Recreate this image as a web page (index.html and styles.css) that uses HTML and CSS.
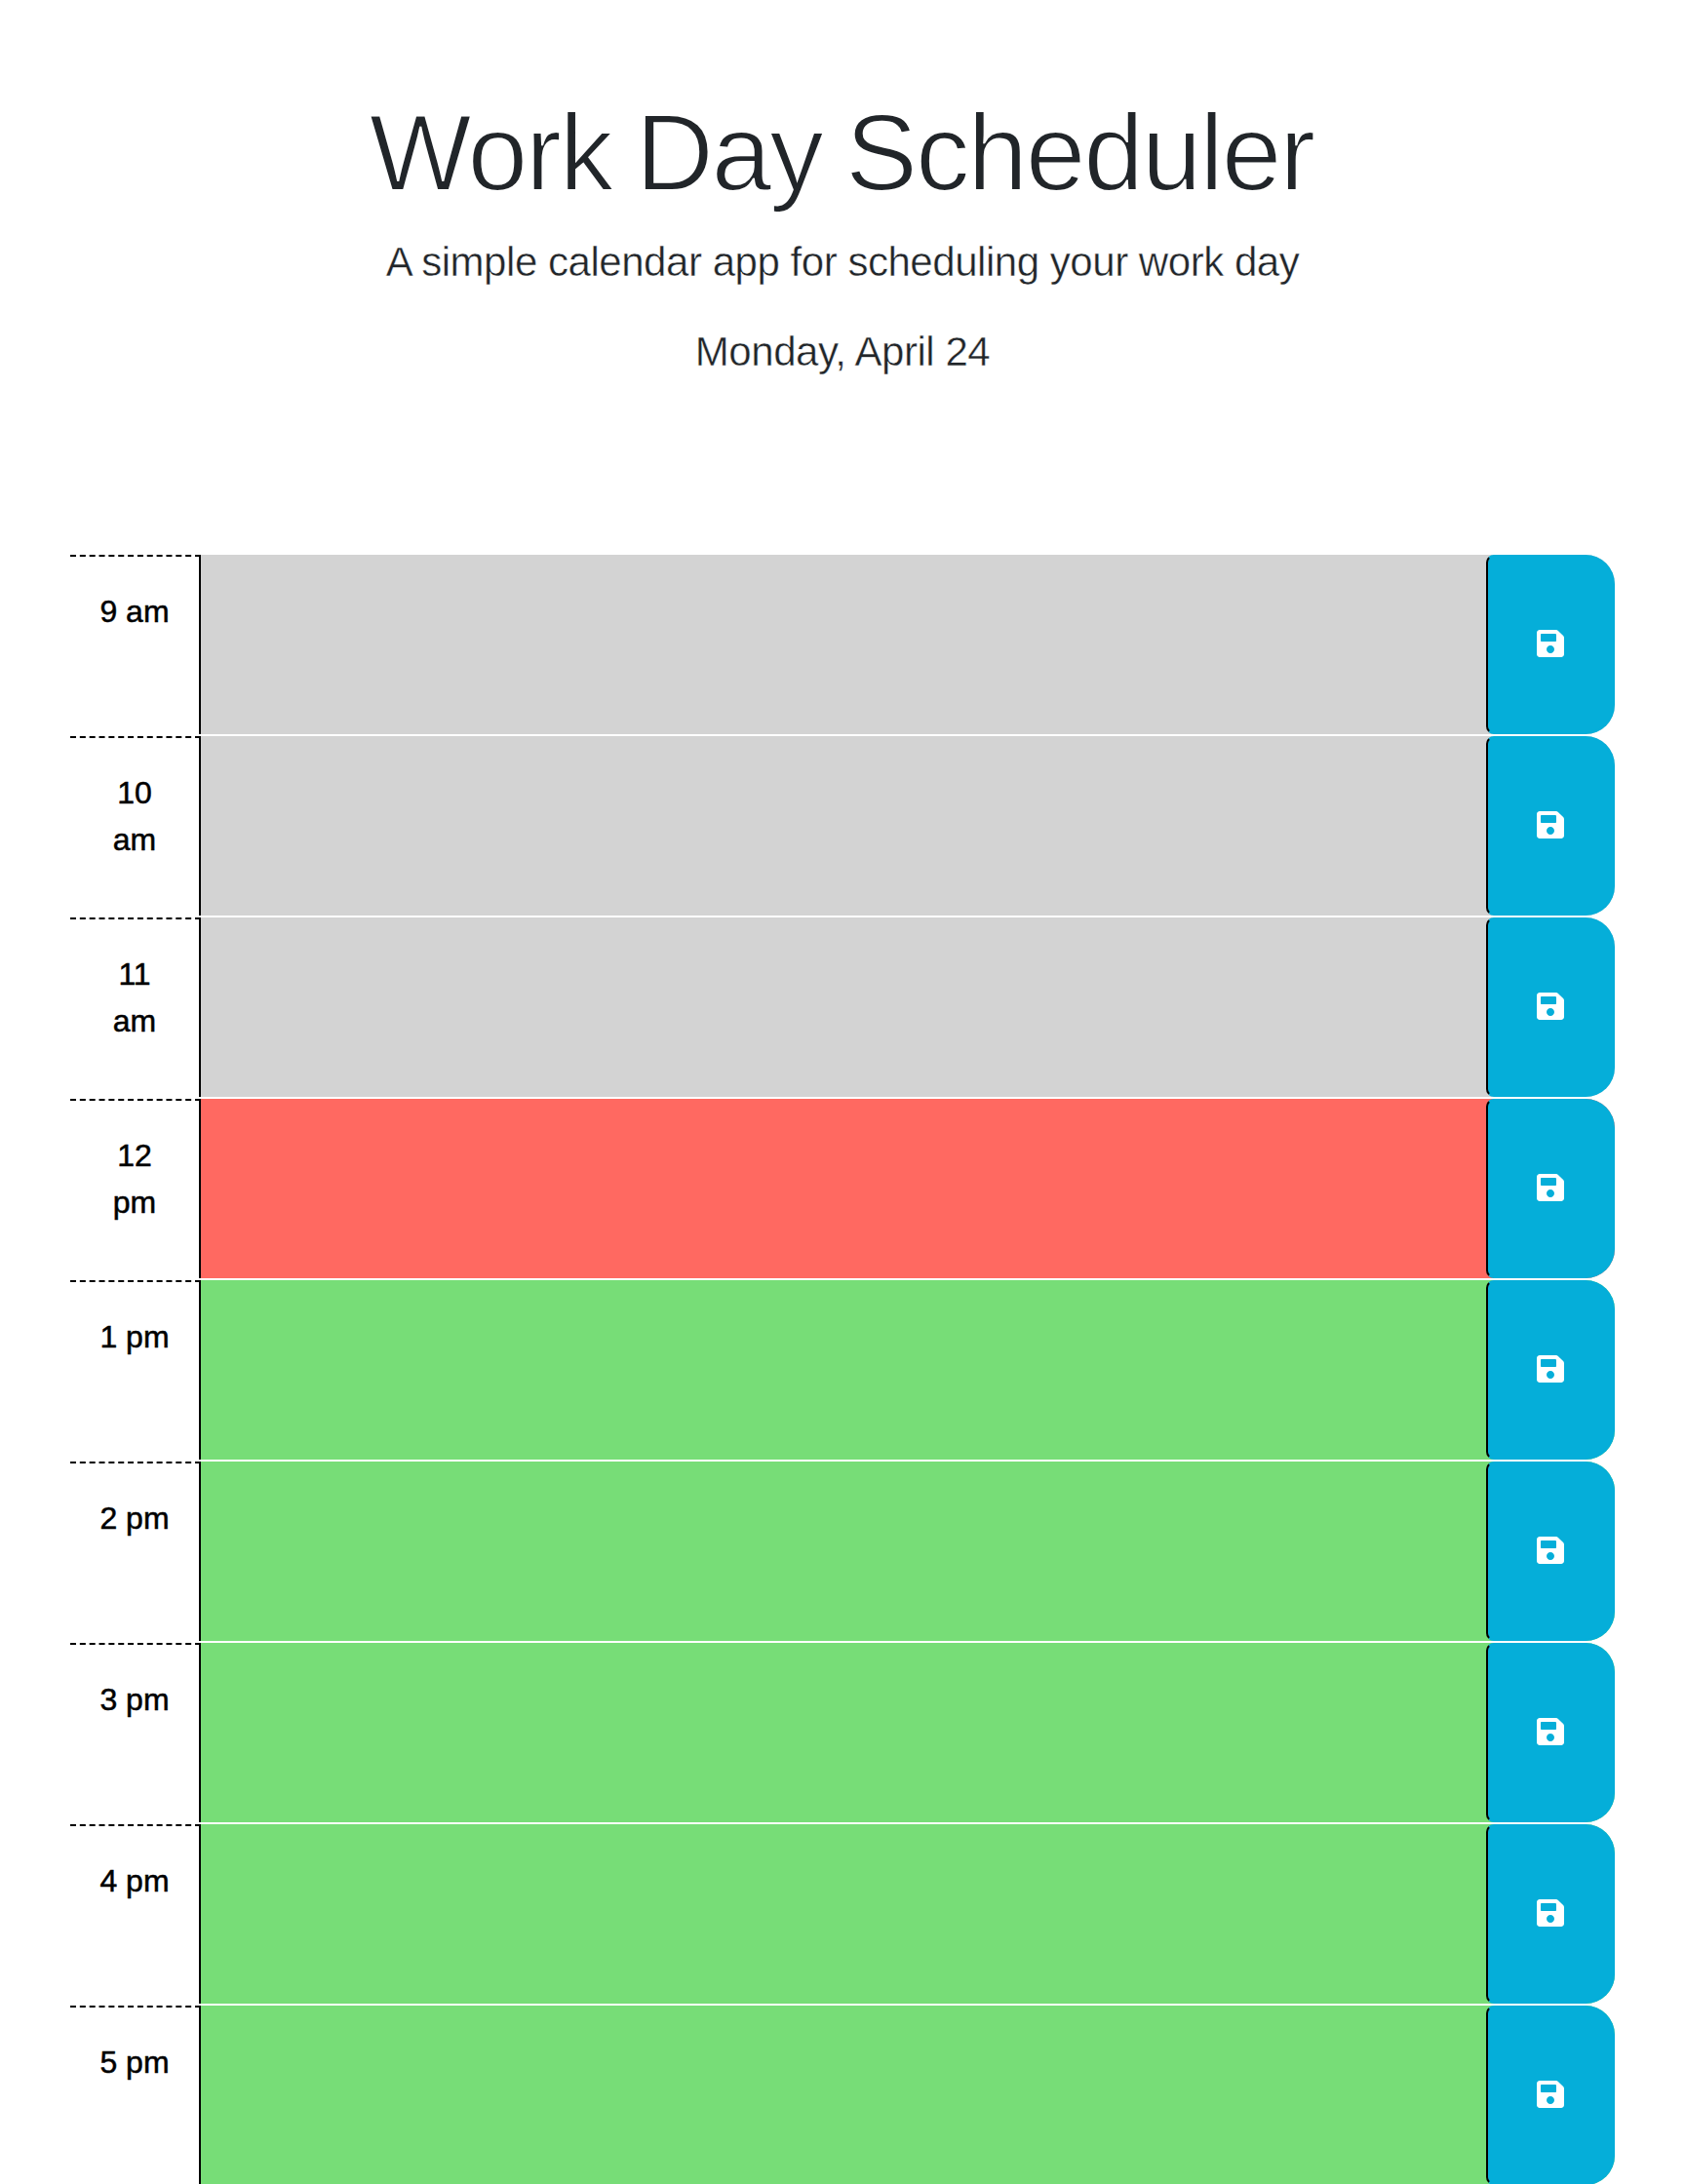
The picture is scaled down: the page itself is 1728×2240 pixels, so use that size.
FILE: index.html
```html
<!DOCTYPE html>
<html lang="en">
<head>
<meta charset="utf-8">
<title>Work Day Scheduler</title>
<link rel="stylesheet" href="styles.css">
</head>
<body>
<svg width="0" height="0" class="sprite" aria-hidden="true">
  <symbol id="save" viewBox="0 0 448 512"><path d="M433.941 129.941l-83.882-83.882A48 48 0 0 0 316.118 32H48C21.49 32 0 53.49 0 80v352c0 26.51 21.49 48 48 48h352c26.51 0 48-21.49 48-48V163.882a48 48 0 0 0-14.059-33.941zM224 416c-35.346 0-64-28.654-64-64 0-35.346 28.654-64 64-64s64 28.654 64 64c0 35.346-28.654 64-64 64zm96-304.52V212c0 6.627-5.373 12-12 12H76c-6.627 0-12-5.373-12-12V108c0-6.627 5.373-12 12-12h228.52c3.183 0 6.235 1.264 8.485 3.515l3.48 3.48A11.996 11.996 0 0 1 320 111.48z"/></symbol>
</svg>
<header class="header">
  <h1 class="title">Work Day Scheduler</h1>
  <p class="lead">A simple calendar app for scheduling your work day</p>
  <p class="lead">Monday, April 24</p>
</header>
<main class="schedule">
  <div class="time-block past"><div class="hour">9 am</div><div class="description"></div><button class="save-btn" aria-label="save"><svg class="icon"><use href="#save"/></svg></button></div>
  <div class="time-block past"><div class="hour">10 am</div><div class="description"></div><button class="save-btn" aria-label="save"><svg class="icon"><use href="#save"/></svg></button></div>
  <div class="time-block past"><div class="hour">11 am</div><div class="description"></div><button class="save-btn" aria-label="save"><svg class="icon"><use href="#save"/></svg></button></div>
  <div class="time-block present"><div class="hour">12 pm</div><div class="description"></div><button class="save-btn" aria-label="save"><svg class="icon"><use href="#save"/></svg></button></div>
  <div class="time-block future"><div class="hour">1 pm</div><div class="description"></div><button class="save-btn" aria-label="save"><svg class="icon"><use href="#save"/></svg></button></div>
  <div class="time-block future"><div class="hour">2 pm</div><div class="description"></div><button class="save-btn" aria-label="save"><svg class="icon"><use href="#save"/></svg></button></div>
  <div class="time-block future"><div class="hour">3 pm</div><div class="description"></div><button class="save-btn" aria-label="save"><svg class="icon"><use href="#save"/></svg></button></div>
  <div class="time-block future"><div class="hour">4 pm</div><div class="description"></div><button class="save-btn" aria-label="save"><svg class="icon"><use href="#save"/></svg></button></div>
  <div class="time-block future"><div class="hour">5 pm</div><div class="description"></div><button class="save-btn" aria-label="save"><svg class="icon"><use href="#save"/></svg></button></div>
</main>
</body>
</html>
```

FILE: styles.css
```css
* { box-sizing: border-box; }

body {
  margin: 0;
  height: 2240px;
  overflow: hidden;
  background: #fff;
  color: #212529;
  font-family: "Liberation Sans", Arial, sans-serif;
}

.sprite { display: block; }

.header {
  height: 569px;
  padding-top: 92px;
  text-align: center;
}

/* A background-coloured outline thins the strokes to a light weight */
.title {
  margin: 0 0 17px;
  padding-right: 2px;
  font-size: 111px;
  font-weight: 400;
  line-height: 130px;
  letter-spacing: -2.2px;
  word-spacing: -4px;
  -webkit-text-stroke: 2px #fff;
}

.lead {
  margin: 0 0 32px;
  font-size: 42px;
  line-height: 60px;
  letter-spacing: -0.46px;
  -webkit-text-stroke: 0.45px #fff;
}

.schedule {
  display: flex;
  flex-direction: column;
  gap: 2px;
  padding: 0 72px;
}

.time-block {
  display: flex;
  height: 184px;
  border-radius: 0 30px 30px 0;
}

.past { background: #d3d3d3; }
.present { background: #ff6961; }
.future { background: #77dd77; }

.hour {
  width: 134px;
  padding: 32px 24px 0;
  border-top: 2px dashed #000;
  border-right: 2px solid #000;
  background: #fff;
  color: #000;
  font-size: 32px;
  line-height: 48px;
  text-align: center;
  -webkit-text-stroke: 0.5px #000;
}

.description { flex: 1; }

.save-btn {
  display: flex;
  align-items: center;
  justify-content: center;
  width: 132px;
  padding: 0;
  border: 2px solid #05aed9;
  border-left-color: #000;
  border-radius: 8px 30px 30px 8px;
  background: #05aed9;
  color: #fff;
}

.icon {
  width: 28px;
  height: 32px;
  margin-bottom: 2px;
  fill: currentColor;
}
```
